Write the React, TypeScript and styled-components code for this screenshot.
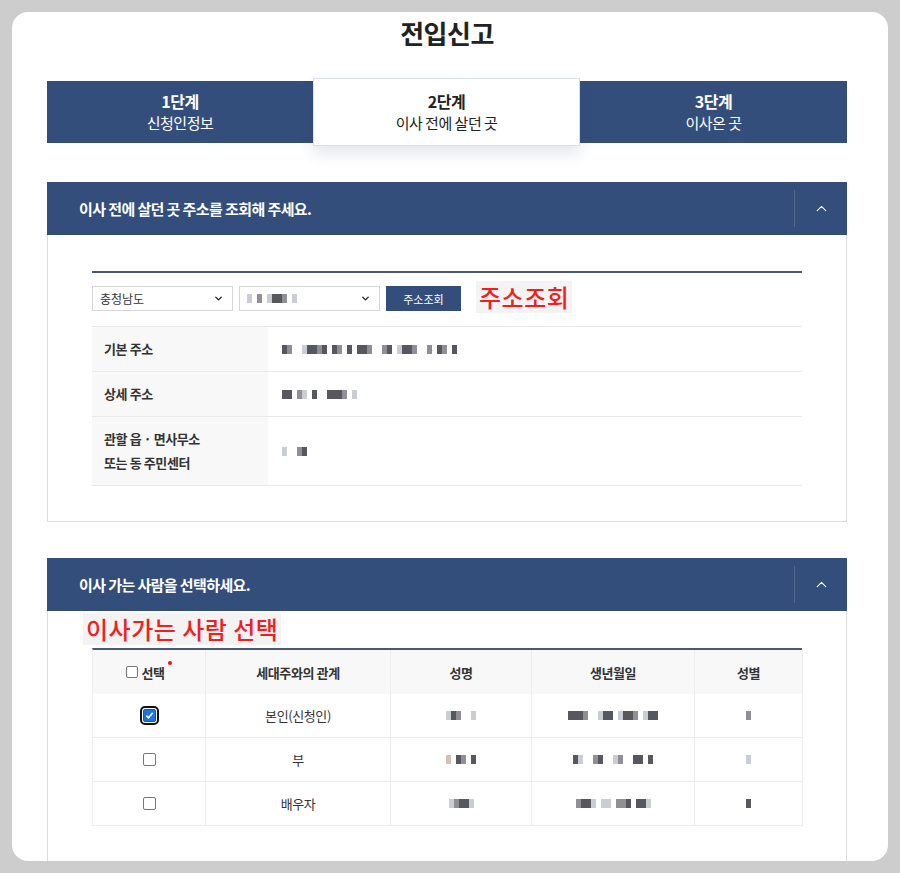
import styled, { createGlobalStyle } from 'styled-components'
import { ChevronDown, ChevronUp } from 'lucide-react'

const NAVY = '#344e7b'

const GlobalStyle = createGlobalStyle`
  html, body {
    margin: 0;
    background: #cdcdcd;
  }
  body {
    font-family: "Noto Sans CJK KR", "Noto Sans", sans-serif;
    color: #333;
  }
`

const steps = [
  { no: '1단계', name: '신청인정보' },
  { no: '2단계', name: '이사 전에 살던 곳' },
  { no: '3단계', name: '이사온 곳' },
]

const addressRows = [
  { label: ['기본 주소'], value: 'ab  caaba ab a aab  ba caab  b ab a', tall: false },
  { label: ['상세 주소'], value: 'aa bc a  aaab c', tall: false },
  { label: ['관할 읍 · 면사무소', '또는 동 주민센터'], value: 'c  ba', tall: true },
]

const people = [
  { checked: true, relation: '본인(신청인)', name: 'cab  c', birth: 'aaab  caa caab caa', sex: 'b' },
  { checked: false, relation: '부', name: 'd ab a', birth: 'ac  ba  cb  aa a', sex: 'c' },
  { checked: false, relation: '배우자', name: 'cbaac', birth: 'baac cc bba aac', sex: 'a' },
]

const colors: Record<string, string> = {
  a: '#3a3a44',
  b: '#7d7b86',
  c: '#c2c4cc',
  d: '#c9b8a6',
}

const Mosaic = ({ cells }: { cells: string }) => (
  <MosaicRow>
    {cells.split('').map((c, i) => (
      <MosaicCell key={i} style={{ background: colors[c] || 'transparent' }} />
    ))}
  </MosaicRow>
)

const Check = ({ checked, small }: { checked?: boolean; small?: boolean }) => (
  <CheckBox $checked={checked} $small={small}>
    {checked && (
      <svg width="9" height="9" viewBox="0 0 10 10">
        <path d="M1.5 5.2 L4 7.6 L8.6 2" fill="none" stroke="#fff" strokeWidth="1.8" />
      </svg>
    )}
  </CheckBox>
)

export default function App() {
  return (
    <Page>
      <GlobalStyle />
      <Card>
        <Title>전입신고</Title>

        <Steps>
          {steps.map((s, i) => (
            <Step key={s.no} $active={i === 1}>
              <StepNo>{s.no}</StepNo>
              <StepName>{s.name}</StepName>
            </Step>
          ))}
        </Steps>

        <Section>
          <SectionHeader>
            이사 전에 살던 곳 주소를 조회해 주세요.
            <Toggle>
              <ChevronUp size={17} strokeWidth={1.6} />
            </Toggle>
          </SectionHeader>
          <SectionBody>
            <TopLine />
            <SearchRow>
              <SelectBox>
                충청남도
                <ChevronDown size={11} strokeWidth={3} />
              </SelectBox>
              <SelectBox>
                <Mosaic cells="c b caab c" />
                <ChevronDown size={11} strokeWidth={3} />
              </SelectBox>
              <SearchButton>주소조회</SearchButton>
              <Note $size={24}>주소조회</Note>
            </SearchRow>
            <AddressTable>
              {addressRows.map((r) => (
                <AddressRow key={r.label[0]} $tall={r.tall}>
                  <AddressLabel>
                    {r.label.map((l) => (
                      <span key={l}>{l}</span>
                    ))}
                  </AddressLabel>
                  <AddressValue>
                    <Mosaic cells={r.value} />
                  </AddressValue>
                </AddressRow>
              ))}
            </AddressTable>
          </SectionBody>
        </Section>

        <Section $gap={36}>
          <SectionHeader>
            이사 가는 사람을 선택하세요.
            <Toggle>
              <ChevronUp size={17} strokeWidth={1.6} />
            </Toggle>
          </SectionHeader>
          <SectionBody $top={2}>
            <Note $size={24} $shift>이사가는 사람 선택</Note>
            <PeopleTable>
              <HeadCell>
                <Check small />
                선택
                <Dot />
              </HeadCell>
              <HeadCell>세대주와의 관계</HeadCell>
              <HeadCell>성명</HeadCell>
              <HeadCell>생년월일</HeadCell>
              <HeadCell>성별</HeadCell>
              {people.map((p) => (
                <>
                  <BodyCell key={p.relation + 'c'}>
                    <Check checked={p.checked} />
                  </BodyCell>
                  <BodyCell key={p.relation}>{p.relation}</BodyCell>
                  <BodyCell key={p.relation + 'n'}>
                    <Mosaic cells={p.name} />
                  </BodyCell>
                  <BodyCell key={p.relation + 'b'}>
                    <Mosaic cells={p.birth} />
                  </BodyCell>
                  <BodyCell key={p.relation + 's'}>
                    <Mosaic cells={p.sex} />
                  </BodyCell>
                </>
              ))}
            </PeopleTable>
          </SectionBody>
        </Section>
      </Card>
    </Page>
  )
}

const Page = styled.div`
  padding: 12px;
  height: 873px;
  box-sizing: border-box;
`

const Card = styled.div`
  height: 849px;
  box-sizing: border-box;
  background: #fff;
  border-radius: 16px;
  overflow: hidden;
  padding: 1px 41px 0 35px;
`

const Title = styled.h1`
  margin: 0;
  line-height: 40px;
  text-align: center;
  font-size: 26px;
  font-weight: 700;
  color: #222;
  letter-spacing: -0.5px;
`

const Steps = styled.div`
  margin-top: 28px;
  display: grid;
  grid-template-columns: 266px 267px 267px;
  height: 62px;
  background: ${NAVY};
`

const Step = styled.div<{ $active?: boolean }>`
  display: flex;
  flex-direction: column;
  align-items: center;
  justify-content: center;
  color: ${(p) => (p.$active ? '#222' : '#fff')};
  background: ${(p) => (p.$active ? '#fff' : 'transparent')};
  margin: ${(p) => (p.$active ? '-3px 0' : '0')};
  border: ${(p) => (p.$active ? '1px solid #d9dee8' : 'none')};
  box-shadow: ${(p) => (p.$active ? '0 8px 14px rgba(40, 60, 100, 0.12)' : 'none')};
  position: relative;
  z-index: ${(p) => (p.$active ? 1 : 0)};
`

const StepNo = styled.div`
  font-size: 16px;
  font-weight: 700;
  line-height: 22px;
  letter-spacing: -0.5px;
`

const StepName = styled.div`
  font-size: 15px;
  line-height: 22px;
  letter-spacing: -0.5px;
`

const Section = styled.section<{ $gap?: number }>`
  margin-top: ${(p) => p.$gap ?? 39}px;
`

const SectionHeader = styled.div`
  height: 53px;
  display: flex;
  align-items: center;
  padding-left: 32px;
  background: ${NAVY};
  color: #fff;
  font-size: 15px;
  font-weight: 700;
  letter-spacing: -0.6px;
`

const Toggle = styled.div`
  margin-left: auto;
  width: 52px;
  height: 37px;
  display: flex;
  align-items: center;
  justify-content: center;
  border-left: 1px solid rgba(255, 255, 255, 0.14);
`

const SectionBody = styled.div<{ $top?: number }>`
  border: 1px solid #dcdcdc;
  border-top: none;
  padding: ${(p) => p.$top ?? 36}px 44px 35px;
`

const TopLine = styled.div`
  height: 2px;
  background: #4b5a6e;
`

const SearchRow = styled.div`
  margin-top: 13px;
  display: flex;
  align-items: center;
  gap: 6px;
  height: 25px;
`

const SelectBox = styled.div`
  width: 141px;
  height: 25px;
  box-sizing: border-box;
  border: 1px solid #d6d6d6;
  display: flex;
  align-items: center;
  justify-content: space-between;
  padding: 0 8px 0 7px;
  font-size: 12px;
  color: #333;
  svg {
    color: #222;
  }
`

const SearchButton = styled.div`
  width: 75px;
  height: 25px;
  background: ${NAVY};
  color: #fff;
  font-size: 11px;
  display: flex;
  align-items: center;
  justify-content: center;
`

const Note = styled.div<{ $size: number; $shift?: boolean }>`
  display: inline-block;
  align-self: flex-start;
  margin-left: ${(p) => (p.$shift ? '-9px' : '9px')};
  margin-top: ${(p) => (p.$shift ? '0' : '-5px')};
  margin-bottom: ${(p) => (p.$shift ? '3px' : '0')};
  padding: 0 3px;
  background: #f3f3f3;
  color: #f21d1d;
  font-size: ${(p) => p.$size}px;
  line-height: 32px;
  font-weight: 500;
  letter-spacing: 0.5px;
`

const AddressTable = styled.div`
  margin-top: 15px;
  border-top: 1px solid #e8e8e8;
`

const AddressRow = styled.div<{ $tall?: boolean }>`
  display: grid;
  grid-template-columns: 176px 1fr;
  height: ${(p) => (p.$tall ? 68 : 44)}px;
  border-bottom: 1px solid #e8e8e8;
`

const AddressLabel = styled.div`
  background: #f8f8f8;
  padding-left: 12px;
  display: flex;
  flex-direction: column;
  justify-content: center;
  font-size: 13px;
  font-weight: 700;
  line-height: 24px;
  color: #333;
  letter-spacing: -0.4px;
`

const AddressValue = styled.div`
  display: flex;
  align-items: center;
  padding-left: 14px;
`

const MosaicRow = styled.span`
  display: inline-flex;
  height: 9px;
`

const MosaicCell = styled.span`
  width: 5px;
  height: 9px;
  opacity: 0.85;
`

const PeopleTable = styled.div`
  display: grid;
  grid-template-columns: 113px 185px 141px 163px 108px;
  border-top: 2px solid #4b5a6e;
  border-left: 1px solid #ececec;
`

const HeadCell = styled.div`
  height: 44px;
  background: #f8f8f8;
  display: flex;
  align-items: center;
  justify-content: center;
  gap: 3px;
  font-size: 13px;
  font-weight: 700;
  color: #333;
  border-right: 1px solid #ececec;
  letter-spacing: -0.4px;
`

const BodyCell = styled.div`
  height: 44px;
  display: flex;
  align-items: center;
  justify-content: center;
  font-size: 13px;
  color: #333;
  border-right: 1px solid #ececec;
  border-bottom: 1px solid #ececec;
  box-sizing: border-box;
  letter-spacing: -0.4px;
`

const CheckBox = styled.span<{ $checked?: boolean; $small?: boolean }>`
  width: ${(p) => (p.$small ? 10 : 11)}px;
  height: ${(p) => (p.$small ? 10 : 11)}px;
  border: 1px solid ${(p) => (p.$checked ? '#0b57d0' : '#777')};
  border-radius: 2px;
  background: ${(p) => (p.$checked ? '#1a73e8' : '#fff')};
  outline: ${(p) => (p.$checked ? '2px solid #111' : 'none')};
  outline-offset: 1px;
  display: inline-flex;
  align-items: center;
  justify-content: center;
`

const Dot = styled.span`
  width: 4px;
  height: 4px;
  border-radius: 50%;
  background: #e8161c;
  align-self: flex-start;
  margin-top: 11px;
`
